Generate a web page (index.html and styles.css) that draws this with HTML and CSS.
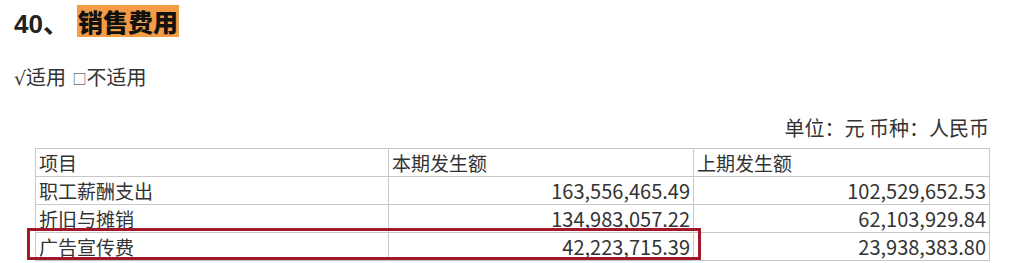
FILE: index.html
```html
<!DOCTYPE html>
<html lang="zh">
<head>
<meta charset="utf-8">
<link rel="stylesheet" href="styles.css">
</head>
<body>
<div class="page">
  <h2 class="title"><span class="num">40、</span><span class="hl">销售费用</span></h2>
  <p class="apply"><span class="chk">√</span>适用 <span class="box">□</span>不适用</p>
  <p class="unit">单位：元 币种：人民币</p>
  <div class="tablewrap">
    <table class="data">
      <colgroup>
        <col class="c1"><col class="c2"><col class="c3">
      </colgroup>
      <tr><td>项目</td><td>本期发生额</td><td>上期发生额</td></tr>
      <tr><td>职工薪酬支出</td><td class="n">163,556,465.49</td><td class="n">102,529,652.53</td></tr>
      <tr><td>折旧与摊销</td><td class="n">134,983,057.22</td><td class="n">62,103,929.84</td></tr>
      <tr><td>广告宣传费</td><td class="n">42,223,715.39</td><td class="n">23,938,383.80</td></tr>
    </table>
    <div class="mark"></div>
  </div>
</div>
</body>
</html>
```
FILE: styles.css
```css
html, body {
  margin: 0;
  padding: 0;
  background: #fff;
}
body {
  font-family: "Noto Sans CJK SC", "Noto Sans", sans-serif;
  color: #333;
  width: 1028px;
  height: 263px;
  overflow: hidden;
}
.page {
  padding: 5px 0 0 14px;
}
.title {
  margin: 0;
  height: 32px;
  display: flex;
  align-items: center;
  font-size: 25px;
  font-weight: 900;
  color: #222;
}
.num {
  width: 63px;
  font-family: "Liberation Sans", "Noto Sans CJK SC", sans-serif;
  font-weight: 700;
  font-size: 26px;
}
.hl {
  background: #f39b45;
  height: 32px;
  line-height: 32px;
  padding: 0 1px 0 1px;
  color: #111;
  font-size: 25px;
}
.apply {
  margin: 28px 0 0 0;
  font-size: 20px;
  line-height: 24px;
}
.chk {
  font-family: "DejaVu Sans", sans-serif;
  font-size: 19px;
}
.box {
  font-size: 14px;
  margin-left: 2px;
  position: relative;
  top: -1px;
}
.unit {
  margin: 24px 0 0 0;
  width: 975px;
  text-align: right;
  font-size: 20px;
  line-height: 26px;
}
.tablewrap {
  position: relative;
  margin: 7px 0 0 21px;
}
.data {
  border-collapse: collapse;
  font-size: 19px;
  color: #333;
}
.c1 { width: 353px; }
.c2 { width: 305px; }
.c3 { width: 296px; }
.data td {
  border: 1px solid #c8c8c8;
  height: 27px;
  padding: 0 3px;
  line-height: 27px;
  white-space: nowrap;
  vertical-align: bottom;
}
.data td.n {
  text-align: right;
  font-size: 20px;
}
.mark {
  position: absolute;
  left: -8px;
  top: 80px;
  width: 668px;
  height: 26px;
  border: 3px solid #a3172a;
}
```
